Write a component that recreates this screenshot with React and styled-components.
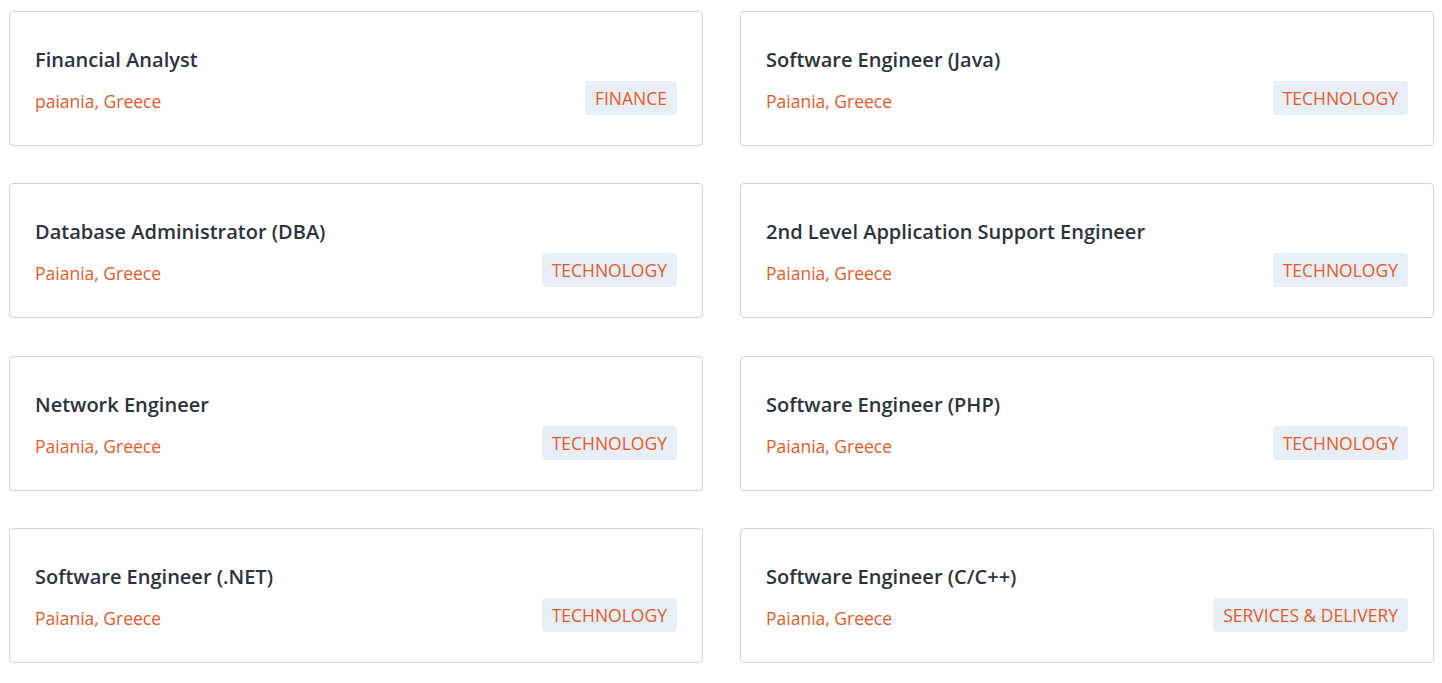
import React from "react";
import styled, { createGlobalStyle } from "styled-components";

const GlobalStyle = createGlobalStyle`
  html, body { margin: 0; padding: 0; background: #ffffff; }
  body { font-family: "Open Sans", "Noto Sans", sans-serif; }
`;

const Grid = styled.div`
  display: grid;
  grid-template-columns: 1fr 1fr;
  column-gap: 37px;
  row-gap: 37.33px;
  padding: 11px 8px 0 9px;
`;

const Card = styled.a`
  display: flex;
  align-items: flex-start;
  justify-content: space-between;
  height: 135px;
  box-sizing: border-box;
  padding: 35px 25px 0 25px;
  border: 1px solid #d3d3d3;
  border-radius: 4px;
  background: #fff;
  text-decoration: none;
`;

const Info = styled.div`
  display: flex;
  flex-direction: column;
  gap: 15px;
`;

const Title = styled.h3`
  margin: 0;
  font-size: 20px;
  line-height: 26px;
  font-weight: 600;
  color: #2b333d;
`;

const Location = styled.span`
  font-size: 17.5px;
  line-height: 26px;
  color: #e8591f;
`;

const Badge = styled.span`
  display: inline-flex;
  align-items: center;
  height: 34px;
  padding: 0 10px;
  margin-top: 34px;
  border-radius: 4px;
  background: #e8eef5;
  color: #e8591f;
  font-size: 17.5px;
  text-transform: uppercase;
`;

const jobs = [
  ["Financial Analyst", "paiania, Greece", "Finance"],
  ["Software Engineer (Java)", "Paiania, Greece", "Technology"],
  ["Database Administrator (DBA)", "Paiania, Greece", "Technology"],
  ["2nd Level Application Support Engineer", "Paiania, Greece", "Technology"],
  ["Network Engineer", "Paiania, Greece", "Technology"],
  ["Software Engineer (PHP)", "Paiania, Greece", "Technology"],
  ["Software Engineer (.NET)", "Paiania, Greece", "Technology"],
  ["Software Engineer (C/C++)", "Paiania, Greece", "Services & Delivery"],
];

export default function App() {
  return (
    <>
      <GlobalStyle />
      <Grid>
        {jobs.map(([title, loc, cat]) => (
          <Card key={title} href="#">
            <Info>
              <Title>{title}</Title>
              <Location>{loc}</Location>
            </Info>
            <Badge>{cat}</Badge>
          </Card>
        ))}
      </Grid>
    </>
  );
}
